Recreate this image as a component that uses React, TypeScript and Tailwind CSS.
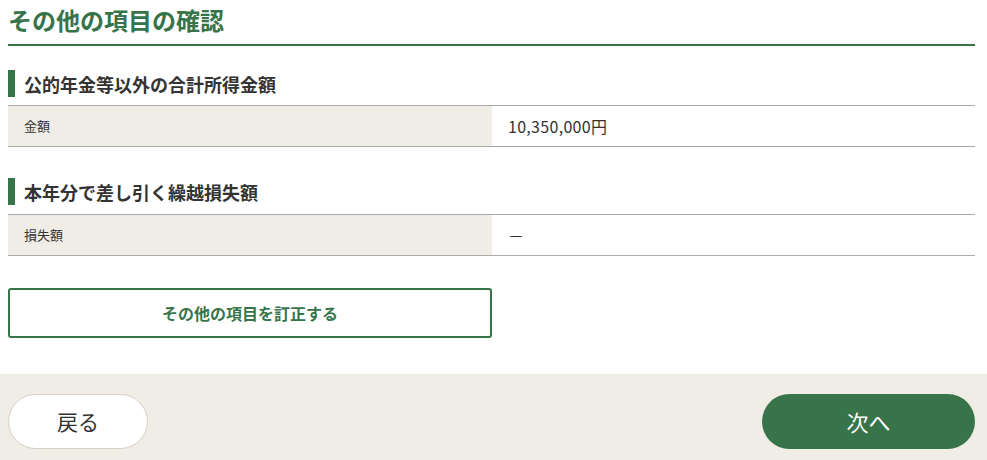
import React from "react";

const GREEN = "text-[#37744a]";

const SectionHeading: React.FC<{ title: string }> = ({ title }) => (
  <div className="flex items-center h-[27px]">
    <div className="w-[7px] h-[27px] bg-[#37744a]" />
    <h2 className="ml-[9px] text-[18px] font-bold text-[#333] leading-none">{title}</h2>
  </div>
);

const Row: React.FC<{ label: string; value: string }> = ({ label, value }) => (
  <div className="flex border-t border-b border-[#aaa] h-[42px]">
    <div className="w-[484px] bg-[#f0ede6] flex items-center pl-4 text-[13px] text-[#333]">
      {label}
    </div>
    <div className="flex-1 flex items-center pl-4 text-[16px] tracking-[0.3px] text-[#333]">{value}</div>
  </div>
);

const App: React.FC = () => {
  return (
    <div className="w-[987px] h-[460px] bg-white overflow-hidden font-['Noto_Sans_CJK_JP',sans-serif]">
      <div className="pl-2 pr-3">
        <div className="h-[46px] border-b-2 border-[#37744a] flex items-center">
          <h1 className={`text-[24px] font-bold ${GREEN} leading-none -mt-[4px]`}>その他の項目の確認</h1>
        </div>

        <div className="mt-[24px]">
          <SectionHeading title="公的年金等以外の合計所得金額" />
        </div>
        <div className="mt-[8px]">
          <Row label="金額" value="10,350,000円" />
        </div>

        <div className="mt-[31px]">
          <SectionHeading title="本年分で差し引く繰越損失額" />
        </div>
        <div className="mt-[9px]">
          <Row label="損失額" value="－" />
        </div>

        <button
          className={`mt-[32px] w-[484px] h-[50px] border-2 border-[#37744a] rounded-[3px] bg-white text-[16px] font-bold ${GREEN}`}
        >
          その他の項目を訂正する
        </button>
      </div>

      <div className="mt-[36px] h-[86px] bg-[#f0ede6] flex items-start justify-between pl-2 pr-3 pt-[20px]">
        <button className="w-[140px] h-[55px] rounded-full bg-white border border-[#d6cfc3] text-[21px] text-[#333]">
          戻る
        </button>
        <button className="w-[213px] h-[55px] rounded-full bg-[#37744a] text-[22px] text-white">
          次へ
        </button>
      </div>
    </div>
  );
};

export default App;
